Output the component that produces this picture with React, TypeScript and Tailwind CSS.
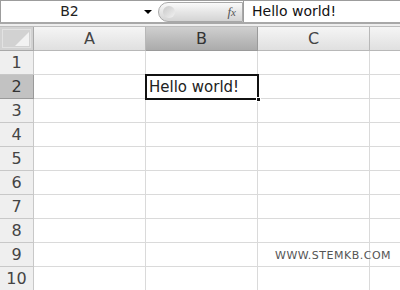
import React from "react";

const cols = ["A", "B", "C"];
const rows = [1, 2, 3, 4, 5, 6, 7, 8, 9, 10];

export default function App() {
  return (
    <div className="w-[400px] h-[290px] overflow-hidden bg-white" style={{ fontFamily: '"DejaVu Sans", sans-serif' }}>
      {/* formula bar */}
      <div className="flex h-[24px] border-t border-[#9c9c9c] border-b-2 border-b-[#a8a8a8] bg-white">
        <div className="relative w-[158px] flex items-center justify-center border-l border-[#9c9c9c] text-[14px] text-[#222]">
          <span className="mr-[20px]">B2</span>
          <span className="absolute right-[6px] top-[9px] w-0 h-0 border-l-[4px] border-r-[4px] border-t-[4px] border-l-transparent border-r-transparent border-t-black"></span>
        </div>
        <div className="relative w-[85px] h-[20px] mt-[1px] rounded-l-[10px] border border-[#a8a8a8] bg-gradient-to-b from-[#fafafa] via-[#e6e6e6] to-[#d4d4d4] flex items-center justify-end pr-[6px]">
          <span className="absolute left-[4px] top-[3px] w-[12px] h-[12px] rounded-full bg-gradient-to-br from-[#c8c8c8] to-[#f2f2f2]"></span>
          <span className="text-[13px] italic text-[#555]" style={{ fontFamily: '"Liberation Serif", serif' }}>f<span className="text-[11px]">x</span></span>
        </div>
        <div className="flex-1 flex items-center pl-[8px] text-[14px] text-[#111] border-l border-[#9c9c9c]">Hello world!</div>
      </div>
      <div className="h-[3px] bg-[#eeeeee] border-b border-[#bdbdbd]"></div>
      {/* grid */}
      <div className="grid grid-cols-[34px_112px_112px_112px_30px]">
        {/* header row */}
        <div className="h-[24px] border-r border-b border-[#a9a9a9] bg-[#d2d2d2] relative">
          <div className="absolute inset-[2px] border border-[#e2e2e2]"></div>
          <div className="absolute right-[4px] bottom-[4px] w-0 h-0 border-l-[14px] border-t-[14px] border-l-transparent border-t-transparent border-b-[#f2f2f2] border-r-[#f2f2f2] border-b-0 border-r-[0px]" style={{ borderRightWidth: 14, borderTopWidth: 14, borderLeftWidth: 0, borderBottomWidth: 0, borderRightColor: "#f2f2f2", borderTopColor: "transparent" }}></div>
        </div>
        {cols.map((c) => (
          <div
            key={c}
            className={
              c === "B"
                ? "h-[24px] border-r border-b border-[#9a9a9a] bg-gradient-to-b from-[#cfcfcf] to-[#ababab] flex items-center justify-center text-[16px] text-[#333]"
                : "h-[24px] border-r border-b border-[#b8b8b8] bg-gradient-to-b from-[#f5f5f5] to-[#e0e0e0] flex items-center justify-center text-[16px] text-[#444]"
            }
          >
            {c}
          </div>
        ))}
        <div className="h-[24px] border-b border-[#b8b8b8] bg-gradient-to-b from-[#f5f5f5] to-[#e0e0e0]"></div>
        {rows.map((r) => (
          <React.Fragment key={r}>
            <div
              className={
                r === 2
                  ? "h-[24px] border-r border-b border-[#9a9a9a] bg-[#c2c2c2] flex items-center justify-center text-[16px] text-[#333]"
                  : "h-[24px] border-r border-b border-[#c8c8c8] bg-[#efefef] flex items-center justify-center text-[16px] text-[#444]"
              }
            >
              {r}
            </div>
            <div className="h-[24px] border-r border-b border-[#dadada]"></div>
            <div className="h-[24px] border-r border-b border-[#dadada] relative">
              {r === 2 && (
                <div className="absolute left-[-1px] top-[-1px] w-[114px] h-[26px] border-2 border-[#111] flex items-center pl-[2px] text-[15px] text-[#222] z-10">
                  Hello world!
                  <span className="absolute right-[-4px] bottom-[-4px] w-[5px] h-[5px] bg-[#111] border border-white"></span>
                </div>
              )}
            </div>
            <div className="h-[24px] border-r border-b border-[#dadada] relative">
              {r === 9 && (
                <span className="absolute left-[17px] top-[5px] text-[11px] tracking-[0.5px] text-[#555] whitespace-nowrap">WWW.STEMKB.COM</span>
              )}
            </div>
            <div className="h-[24px] border-b border-[#dadada]"></div>
          </React.Fragment>
        ))}
      </div>
    </div>
  );
}
